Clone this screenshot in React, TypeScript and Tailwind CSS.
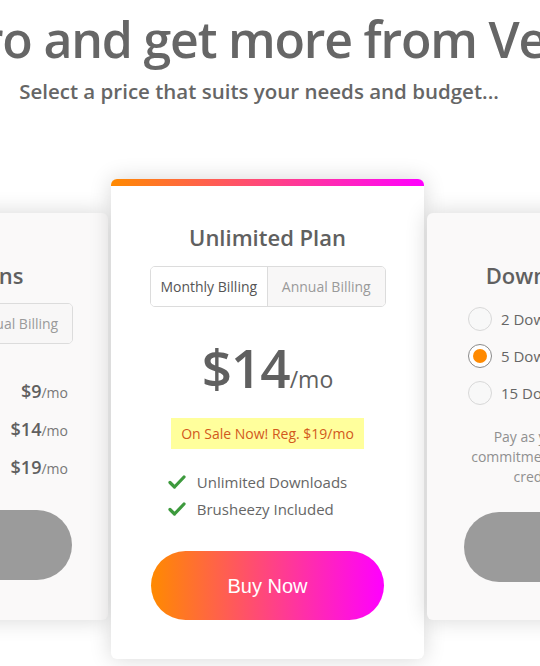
import React from "react";

const font = { fontFamily: '"Open Sans", "Noto Sans", sans-serif' };
const grad = "bg-[linear-gradient(to_right,#ff8a00,#ff00ff)]";

function Check() {
  return (
    <svg width="18" height="14" viewBox="0 0 18 14" className="shrink-0">
      <path d="M2 7.5 L6.5 12 L16 2" fill="none" stroke="#3d9a3d" strokeWidth="3.2" strokeLinecap="round" strokeLinejoin="round" />
    </svg>
  );
}

function Toggle() {
  return (
    <div className="flex w-[236px] h-[41px] rounded-[5px] border border-[#dcdcdc] overflow-hidden text-[14px]">
      <div className="flex-1 flex items-center justify-center bg-white text-[#555] border-r border-[#dcdcdc]">Monthly Billing</div>
      <div className="flex-1 flex items-center justify-center bg-[#f8f7f7] text-[#9a9a9a]">Annual Billing</div>
    </div>
  );
}

function LeftCard() {
  return (
    <div className="w-[306px] h-[407px] mt-[34px] shrink-0 bg-[#faf9f9] rounded-[6px] shadow-[0_0_22px_rgba(0,0,0,0.16)] flex flex-col items-center">
      <div className="mt-[47px] text-[22px] font-semibold text-[#606060] leading-[30px]">Starter Plans</div>
      <div className="mt-[13px]"><Toggle /></div>
      <div className="mt-[34px] w-[232px] pr-[3px] flex flex-col gap-[12px] text-[#606060]">
        {[
          ["10 Downloads / day", "$9"],
          ["25 Downloads / day", "$14"],
          ["50 Downloads / day", "$19"],
        ].map(([l, p]) => (
          <div key={p} className="flex justify-between items-center h-[26px]">
            <span className="text-[14px] text-[#777]">{l}</span>
            <span>
              <span className="text-[18px] font-semibold">{p}</span>
              <span className="text-[14px] text-[#777]">/mo</span>
            </span>
          </div>
        ))}
      </div>
      <div className="mt-[30px] w-[233px] h-[70px] rounded-full bg-[#9b9b9b]" />
    </div>
  );
}

function RightCard() {
  return (
    <div className="w-[306px] h-[407px] mt-[34px] shrink-0 bg-[#faf9f9] rounded-[6px] shadow-[0_0_22px_rgba(0,0,0,0.16)] flex flex-col items-center">
      <div className="mt-[47px] text-[22px] font-semibold text-[#606060] leading-[30px]">Download Credits</div>
      <div className="mt-[17px] self-start pl-[41px] flex flex-col gap-[13px]">
        {["2 Downloads", "5 Downloads", "15 Downloads"].map((t, i) => (
          <div key={t} className="flex items-center gap-[9px] h-[24px]">
            <div className={`w-[24px] h-[24px] rounded-full border flex items-center justify-center ${i === 1 ? "border-[#8a8a8a] bg-white" : "border-[#d8d8d8] bg-[#f8f8f8]"}`}>
              {i === 1 && <div className="w-[14px] h-[14px] rounded-full bg-[#ff8a00]" />}
            </div>
            <span className="text-[15px] text-[#666]">{t}</span>
          </div>
        ))}
      </div>
      <div className="mt-[22px] w-[250px] text-center text-[14px] leading-[20px] text-[#909090]">
        Pay as you go. No monthly
        <br />
        commitment required. Download
        <br />
        credits never expire.
      </div>
      <div className="mt-[25px] w-[233px] h-[70px] rounded-full bg-[#9b9b9b]" />
    </div>
  );
}

function CenterCard() {
  return (
    <div className="w-[313px] h-[480px] shrink-0 bg-white rounded-[6px] overflow-hidden shadow-[0_0_22px_rgba(0,0,0,0.16)] flex flex-col items-center">
      <div className={`w-full h-[7px] ${grad}`} />
      <div className="mt-[36px] text-[22px] font-semibold text-[#606060] leading-[30px]">Unlimited Plan</div>
      <div className="mt-[14px]"><Toggle /></div>
      <div className="mt-[34px] flex items-baseline text-[#606060] leading-none">
        <span className="text-[53px] font-semibold tracking-[-1px]">$14</span>
        <span className="text-[23px]">/mo</span>
      </div>
      <div className="mt-[24px] h-[31px] px-[10px] flex items-center bg-[#ffff9c] text-[#d2591c] text-[14px]">
        On Sale Now! Reg. $19/mo
      </div>
      <div className="mt-[22px] flex flex-col gap-[5px] text-[15px] text-[#666] -ml-[20px]">
        <div className="flex items-center gap-[11px] h-[22px]"><Check />Unlimited Downloads</div>
        <div className="flex items-center gap-[11px] h-[22px]"><Check />Brusheezy Included</div>
      </div>
      <button
        className={`mt-[31px] w-[233px] h-[69px] rounded-full ${grad} text-white text-[20px]`}
        style={{ fontFamily: '"Liberation Sans", Arial, sans-serif' }}
      >
        Buy Now
      </button>
    </div>
  );
}

export default function App() {
  return (
    <div className="w-[540px] h-[666px] overflow-hidden bg-white" style={font}>
      <div className="flex justify-center pt-[8px] pl-[28px]">
        <h1 className="whitespace-nowrap text-[50px] font-semibold text-[#666] leading-[62px] tracking-[-1.2px] shrink-0">
          Go Pro and get more from Vecteezy
        </h1>
      </div>
      <div className="flex justify-center mt-[6px] pr-[22px]">
        <p className="whitespace-nowrap text-[20.5px] font-semibold text-[#666] leading-[30px]">
          Select a price that suits your needs and budget...
        </p>
      </div>
      <div className="flex items-start gap-[3px] ml-[-198px] mt-[73px]">
        <LeftCard />
        <CenterCard />
        <RightCard />
      </div>
    </div>
  );
}
